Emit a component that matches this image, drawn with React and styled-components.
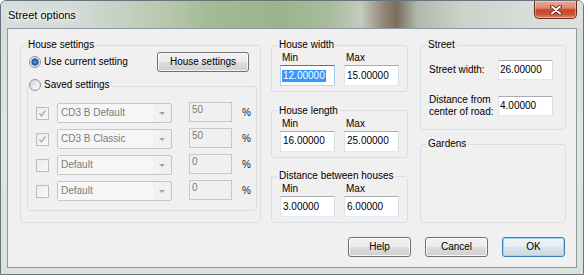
import React from "react";
import styled, { createGlobalStyle } from "styled-components";

const GlobalStyle = createGlobalStyle`
  html, body {
    margin: 0;
    padding: 0;
    background: #ffffff;
  }
  body {
    font-family: "Liberation Sans", Arial, sans-serif;
    font-size: 10px;
    color: #000;
  }
`;

const Window = styled.div`
  box-sizing: border-box;
  width: 584px;
  height: 275px;
  display: flex;
  flex-direction: column;
  border: 1px solid #66757c;
  border-radius: 6px 6px 0 0;
  background: linear-gradient(180deg, #d3dbd8 0%, #e1e6e4 50%, #dce1df 100%);
  overflow: hidden;
`;

const TitleBar = styled.div`
  flex: none;
  height: 27px;
  display: flex;
  align-items: center;
  justify-content: space-between;
  padding: 0 6px 0 7px;
  background: linear-gradient(
    90deg,
    #d7dedb 0px,
    #d2dad5 80px,
    #c2cebe 130px,
    #b5c6ab 170px,
    #a3ba94 210px,
    #9bb48c 280px,
    #a8bc9c 330px,
    #c3cbbf 360px,
    #8e8170 385px,
    #7b6e5e 396px,
    #b2b8ac 416px,
    #ccd2ca 460px,
    #d6dcd6 520px,
    #dce1dd 584px
  );
`;

const Title = styled.span`
  font-size: 11px;
  line-height: 14px;
  color: #000;
  text-shadow: 0 0 6px #fff, 0 0 10px #fff, 0 0 3px #fff;
`;

const CloseButton = styled.div`
  align-self: flex-start;
  box-sizing: border-box;
  width: 43px;
  height: 18px;
  display: flex;
  align-items: center;
  justify-content: center;
  border: 1px solid #6e2a1f;
  border-top: none;
  border-radius: 0 0 5px 5px;
  background: linear-gradient(
    180deg,
    #e8ab99 0%,
    #dc8670 42%,
    #c5442a 52%,
    #cc5233 78%,
    #dc8b6b 100%
  );
  box-shadow: inset 0 0 0 1px rgba(255, 255, 255, 0.35);
`;

const Client = styled.div`
  flex: 1;
  margin: 0 6px 6px 6px;
  border: 1px solid #8d9aa1;
  background: #f0f0f0;
  padding: 10px 10px 0 12px;
  display: flex;
  flex-direction: column;
`;

const Columns = styled.div`
  height: 184px;
  display: flex;
  align-items: stretch;
`;

const Group = styled.fieldset`
  box-sizing: border-box;
  margin: 0;
  padding: 0;
  min-width: 0;
  border: 1px solid #d5dfe5;
  border-radius: 3px;
`;

const Caption = styled.legend`
  margin-left: 5px;
  padding: 0 2px;
  font-size: 10px;
  line-height: 12px;
`;

/* left: house settings */
const HouseGroup = styled(Group)`
  width: 241px;
`;

const HouseBody = styled.div`
  padding: 1px 3px 14px 6px;
`;

const TopRow = styled.div`
  height: 20px;
  display: flex;
  align-items: center;
  justify-content: space-between;
  padding: 0 8px 0 2px;
`;

const RadioLabel = styled.span`
  display: inline-flex;
  align-items: center;
  gap: 3px;
  line-height: 12px;
`;

const RadioDot = styled.span`
  box-sizing: border-box;
  width: 12px;
  height: 12px;
  border-radius: 50%;
  border: 1px solid #8e9092;
  background: ${(p) =>
    p.$on
      ? "radial-gradient(circle, #6cb4f2 0, #2a72c8 1.8px, #1a4d95 3.3px, #d9d9d9 3.9px, #f5f5f5 5.5px)"
      : "linear-gradient(135deg, #d2d2d2 0%, #eeeeee 60%, #fbfbfb 100%)"};
`;

const SavedGroup = styled(Group)`
  margin-top: 7px;
`;

const RadioCaption = styled.legend`
  margin-left: 0;
  padding: 0 3px 0 1px;
  line-height: 12px;
`;

const SavedBody = styled.div`
  padding: 9px 0 9px 8px;
  display: flex;
  flex-direction: column;
  gap: 6px;
`;

const SavedRow = styled.div`
  height: 20px;
  display: flex;
  align-items: center;
`;

const CheckBox = styled.span`
  box-sizing: border-box;
  width: 13px;
  height: 13px;
  margin-right: 8px;
  border: 1px solid #bdbdbd;
  background: linear-gradient(135deg, #ececec, #f9f9f9);
  display: flex;
  align-items: center;
  justify-content: center;
`;

const Combo = styled.div`
  box-sizing: border-box;
  width: 115px;
  height: 20px;
  margin-right: 17px;
  display: flex;
  border: 1px solid #c6c6c6;
  border-radius: 2px;
  background: #f1f1f1;
  color: #7c7c7c;
`;

const ComboText = styled.span`
  flex: 1;
  padding-left: 3px;
  line-height: 17px;
  background: #f6f6f6;
  white-space: nowrap;
`;

const ComboArrow = styled.span`
  width: 18px;
  display: flex;
  align-items: center;
  justify-content: center;

  &::after {
    content: "";
    border-left: 3px solid transparent;
    border-right: 3px solid transparent;
    border-top: 3px solid #a3a3a3;
  }
`;

const NumBox = styled.div`
  box-sizing: border-box;
  width: 43px;
  height: 20px;
  margin-right: 10px;
  margin-top: -2px;
  padding: 0 2px;
  border: 1px solid #c9c9c9;
  background: #f0f0f0;
  color: #7c7c7c;
  line-height: 13px;
`;

const Percent = styled.span`
  color: #222;
  line-height: 12px;
`;

/* middle: ranges */
const MidColumn = styled.div`
  width: 137px;
  margin-left: 10px;
  display: flex;
  flex-direction: column;
  justify-content: space-between;
`;

const RangeBody = styled.div`
  padding: 1px 8px 5px 8px;
`;

const PairGrid = styled.div`
  display: grid;
  grid-template-columns: 55px 55px;
  column-gap: 9px;
  margin-top: ${(p) => p.$gap || 0}px;
`;

const SmallLabel = styled.span`
  padding-left: 2px;
  line-height: 12px;
`;

const Field = styled.div`
  box-sizing: border-box;
  width: 55px;
  height: ${(p) => p.$h || 21}px;
  display: flex;
  align-items: center;
  padding: 0 ${(p) => (p.$pad === undefined ? 2 : p.$pad)}px;
  background: #fff;
  border: 1px solid;
  border-color: ${(p) =>
    p.$focused
      ? "#3d7bad #a4c9e3 #b7d9ed #b5cfe7"
      : "#abadb3 #dbdfe6 #e3e9ef #e2e3ea"};
  white-space: nowrap;
  line-height: 12px;
`;

const Selected = styled.span`
  background: #3399ff;
  color: #fff;
  padding: 0 1px;
`;

/* right: street */
const RightColumn = styled.div`
  width: 146px;
  margin-left: auto;
  display: flex;
  flex-direction: column;
`;

const StreetBody = styled.div`
  padding: 9px 12px 11px 8px;
`;

const StreetRow = styled.div`
  display: flex;
  align-items: center;
  justify-content: space-between;
  margin-top: ${(p) => p.$gap || 0}px;
`;

const StreetLabel = styled.span`
  line-height: 12px;
`;

const GardensGroup = styled(Group)`
  flex: 1;
  margin-top: 8px;
`;

/* buttons */
const ButtonRow = styled.div`
  margin-top: 14px;
  padding-right: 1px;
  display: flex;
  justify-content: flex-end;
  gap: 14px;
`;

const Button = styled.div`
  box-sizing: border-box;
  width: ${(p) => p.$w || 63}px;
  height: 20px;
  display: flex;
  align-items: center;
  justify-content: center;
  border: 1px solid ${(p) => (p.$default ? "#3c7fb1" : "#707070")};
  border-radius: 3px;
  background: ${(p) =>
    p.$default
      ? "linear-gradient(180deg, #eef4f8 0%, #e6eef4 50%, #d8e3ea 50%, #cfdbe3 100%)"
      : "linear-gradient(180deg, #f2f2f2 0%, #ebebeb 50%, #dddddd 50%, #cfcfcf 100%)"};
  box-shadow: inset 0 0 0 1px
    ${(p) => (p.$default ? "#9fd6f3" : "rgba(255, 255, 255, 0.8)")};
  line-height: 12px;
`;

function CloseGlyph() {
  return (
    <svg width="12" height="10" viewBox="0 0 12 10">
      <path d="M2 1.5 L10 8.5 M10 1.5 L2 8.5" stroke="#4a1d16" strokeWidth="3.6" strokeLinecap="round" />
      <path d="M2 1.5 L10 8.5 M10 1.5 L2 8.5" stroke="#ffffff" strokeWidth="2" strokeLinecap="round" />
    </svg>
  );
}

function Tick() {
  return (
    <svg width="9" height="9" viewBox="0 0 9 9">
      <path d="M1.5 4.5 L3.5 7 L7.5 1.5" fill="none" stroke="#a9a9a9" strokeWidth="1.3" />
    </svg>
  );
}

function Radio({ on, children }) {
  return (
    <RadioLabel>
      <RadioDot $on={on} />
      {children}
    </RadioLabel>
  );
}

const savedRows = [
  { checked: true, name: "CD3 B Default", value: "50" },
  { checked: true, name: "CD3 B Classic", value: "50" },
  { checked: false, name: "Default", value: "0" },
  { checked: false, name: "Default", value: "0" },
];

function RangeGroup({ title, min, max, focused }) {
  return (
    <Group>
      <Caption>{title}</Caption>
      <RangeBody>
        <PairGrid>
          <SmallLabel>Min</SmallLabel>
          <SmallLabel>Max</SmallLabel>
        </PairGrid>
        <PairGrid $gap={1}>
          <Field $focused={focused} $pad={focused ? 1 : 2}>
            {focused ? <Selected>{min}</Selected> : min}
          </Field>
          <Field>{max}</Field>
        </PairGrid>
      </RangeBody>
    </Group>
  );
}

export default function App() {
  return (
    <>
      <GlobalStyle />
      <Window>
        <TitleBar>
          <Title>Street options</Title>
          <CloseButton>
            <CloseGlyph />
          </CloseButton>
        </TitleBar>
        <Client>
          <Columns>
            <HouseGroup>
              <Caption>House settings</Caption>
              <HouseBody>
                <TopRow>
                  <Radio on>Use current setting</Radio>
                  <Button $w={92}>House settings</Button>
                </TopRow>
                <SavedGroup>
                  <RadioCaption>
                    <Radio>Saved settings</Radio>
                  </RadioCaption>
                  <SavedBody>
                    {savedRows.map((row, i) => (
                      <SavedRow key={i}>
                        <CheckBox>{row.checked && <Tick />}</CheckBox>
                        <Combo>
                          <ComboText>{row.name}</ComboText>
                          <ComboArrow />
                        </Combo>
                        <NumBox>{row.value}</NumBox>
                        <Percent>%</Percent>
                      </SavedRow>
                    ))}
                  </SavedBody>
                </SavedGroup>
              </HouseBody>
            </HouseGroup>

            <MidColumn>
              <RangeGroup title="House width" min="12.00000" max="15.00000" focused />
              <RangeGroup title="House length" min="16.00000" max="25.00000" />
              <RangeGroup title="Distance between houses" min="3.00000" max="6.00000" />
            </MidColumn>

            <RightColumn>
              <Group>
                <Caption>Street</Caption>
                <StreetBody>
                  <StreetRow>
                    <StreetLabel>Street width:</StreetLabel>
                    <Field $h={20} $pad={1}>26.00000</Field>
                  </StreetRow>
                  <StreetRow $gap={14}>
                    <StreetLabel>
                      Distance from
                      <br />
                      center of road:
                    </StreetLabel>
                    <Field $h={20} $pad={1}>4.00000</Field>
                  </StreetRow>
                </StreetBody>
              </Group>
              <GardensGroup>
                <Caption>Gardens</Caption>
              </GardensGroup>
            </RightColumn>
          </Columns>

          <ButtonRow>
            <Button>Help</Button>
            <Button>Cancel</Button>
            <Button $default>OK</Button>
          </ButtonRow>
        </Client>
      </Window>
    </>
  );
}
